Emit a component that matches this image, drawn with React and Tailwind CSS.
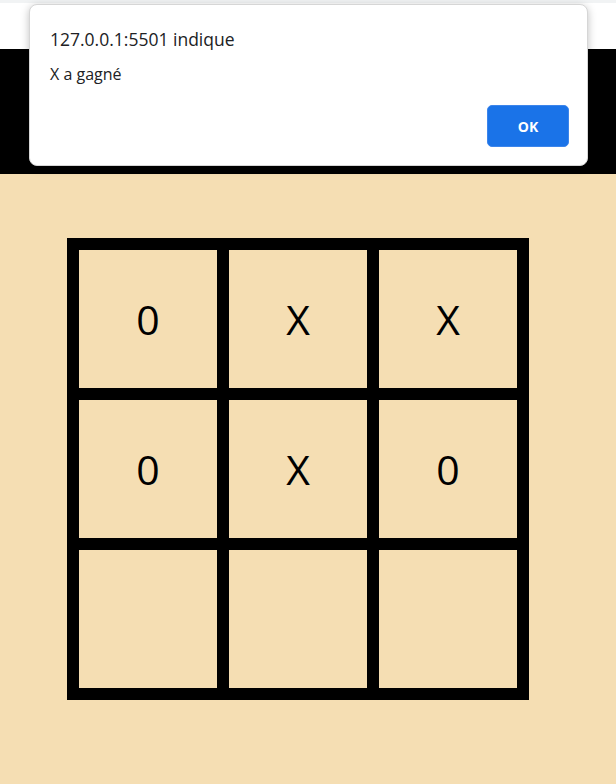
const board = ["0", "X", "X", "0", "X", "0", "", "", ""];

function Cell({ value }) {
  return (
    <div className="flex h-[138px] w-[138px] items-center justify-center bg-[#f5deb3] text-[41px] leading-none text-black">
      {value}
    </div>
  );
}

function AlertDialog() {
  return (
    <div className="absolute left-[29px] top-[4px] h-[162px] w-[559px] rounded-lg border border-[#d6d6d6] bg-white shadow-[0_2px_8px_rgba(0,0,0,0.25)]">
      <div className="px-[20px] pt-[26px]">
        <p className="text-[17.5px] leading-none text-[#202124]">127.0.0.1:5501 indique</p>
        <p className="mt-[17px] text-[16px] leading-none text-[#202124]">X a gagné</p>
      </div>
      <div className="absolute right-[18px] bottom-[18px]">
        <button className="h-[42px] w-[82px] rounded-[5px] border border-[#3c85eb] bg-[#1a73e8] text-[14px] font-bold text-white">
          OK
        </button>
      </div>
    </div>
  );
}

export default function App() {
  return (
    <div className="relative min-h-[784px] bg-[#f5deb3] font-['Open_Sans',sans-serif]">
      {/* top of the page, half covered by the alert */}
      <div className="h-[3px] bg-[#f1f3f4]" />
      <div className="h-[46px] bg-white" />
      <div className="h-[125px] bg-black" />

      <div className="pl-[67px] pt-[64px]">
        <div className="grid w-fit grid-cols-3 gap-[12px] bg-black p-[12px]">
          {board.map((v, i) => (
            <Cell key={i} value={v} />
          ))}
        </div>
      </div>

      <AlertDialog />
    </div>
  );
}
